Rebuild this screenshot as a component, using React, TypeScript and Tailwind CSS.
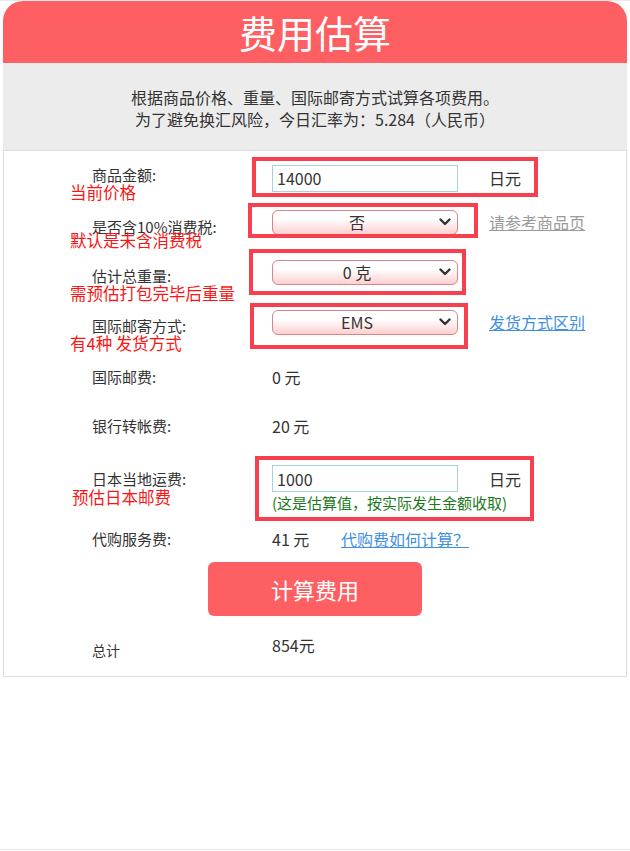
import React from "react";

const FONT = "font-['Microsoft_YaHei','Noto_Sans_CJK_SC',sans-serif]";

function Chevron() {
  return (
    <svg width="12" height="8" viewBox="0 0 12 8" aria-hidden className="pointer-events-none absolute right-[7px] top-1/2 -translate-y-1/2">
      <polyline points="1.5,1.5 6,6 10.5,1.5" fill="none" stroke="#333" strokeWidth="2.4" strokeLinecap="round" strokeLinejoin="round" />
    </svg>
  );
}

function PinkSelect({ value }: { value: string }) {
  return (
    <div className="relative h-[25px] w-[186px]">
      <select
        value={value}
        onChange={() => {}}
        className="h-full w-full appearance-none rounded-[6px] border border-[#da8489] bg-linear-to-b from-white from-35% to-[#fccfcf] pr-[16px] text-[16px] leading-[23px] text-[#333] [text-align-last:center] focus:outline-none"
      >
        <option value={value}>{value}</option>
      </select>
      <Chevron />
    </div>
  );
}

function Note({ className, children }: { className: string; children: React.ReactNode }) {
  return (
    <span className={`pointer-events-none absolute whitespace-nowrap text-[16.5px] leading-[17px] text-[#fb1515] ${className}`}>
      {children}
    </span>
  );
}

function RedBox({ className }: { className: string }) {
  return <span className={`pointer-events-none absolute border-[4px] border-[#f7404f] ${className}`} />;
}

export default function App() {
  return (
    <div className={`${FONT} h-[850px] border-y border-[#e8e8e8] bg-white px-[3px] text-[#333]`}>
      <header className="flex h-[62px] items-center justify-center rounded-t-[20px] bg-[#fd5f62] text-[38px] leading-none text-white">
        费用估算
      </header>

      <div className="h-[87px] bg-[#ececec] pt-[23px] text-center text-[16px] leading-[22px]">
        <p>根据商品价格、重量、国际邮寄方式试算各项费用。</p>
        <p>为了避免换汇风险，今日汇率为：5.284（人民币）</p>
      </div>

      <div className="border border-[#d8dee3] pt-[6px]">
        {/* 商品金额 */}
        <div className="relative flex h-[42px] items-center">
          <div className="-mt-[6px] w-[268px] pl-[88px] text-[15px] leading-[16px]">商品金额:</div>
          <input
            readOnly
            value="14000"
            className="h-[27px] w-[186px] border border-[#a3d4dd] px-[4px] text-[16px] text-[#333] focus:outline-none"
          />
          <span className="ml-[31px] text-[16px]">日元</span>
          <Note className="left-[66px] top-[27px]">当前价格</Note>
          <RedBox className="left-[248px] top-0 h-[40px] w-[286px]" />
        </div>

        {/* 消费税 */}
        <div className="relative flex h-[46px] items-center">
          <div className="mt-[10px] w-[268px] pl-[88px] text-[15px] leading-[16px]">是否含10%消费税:</div>
          <PinkSelect value="否" />
          <a href="#" className="ml-[31px] text-[16px] text-[#9a9a9a] underline">请参考商品页</a>
          <Note className="left-[66px] top-[33px]">默认是未含消费税</Note>
          <RedBox className="left-[244px] top-[4px] h-[35px] w-[230px]" />
        </div>

        {/* 重量 */}
        <div className="relative flex h-[54px] items-center">
          <div className="mt-[8px] w-[268px] pl-[88px] text-[15px] leading-[16px]">估计总重量:</div>
          <PinkSelect value="0 克" />
          <Note className="left-[66px] top-[40px]">需预估打包完毕后重量</Note>
          <RedBox className="left-[245px] top-[4px] h-[46px] w-[217px]" />
        </div>

        {/* 邮寄方式 */}
        <div className="relative flex h-[46px] items-center">
          <div className="mt-[8px] w-[268px] pl-[88px] text-[15px] leading-[16px]">国际邮寄方式:</div>
          <PinkSelect value="EMS" />
          <a href="#" className="ml-[31px] text-[16px] text-[#3f8fe3] underline">发货方式区别</a>
          <Note className="left-[66px] top-[36px]">有4种 发货方式</Note>
          <RedBox className="left-[246px] top-[4px] h-[46px] w-[218px]" />
        </div>

        <div className="flex h-[64px] items-center">
          <div className="w-[268px] pl-[88px] text-[15px]">国际邮费:</div>
          <span className="text-[16px]">0 元</span>
        </div>

        <div className="flex h-[34px] items-center">
          <div className="w-[268px] pl-[88px] text-[15px]">银行转帐费:</div>
          <span className="text-[16px]">20 元</span>
        </div>

        {/* 日本当地运费 */}
        <div className="relative h-[84px] pt-[22px]">
          <div className="flex items-center">
            <div className="w-[268px] pl-[88px] text-[15px] leading-[16px]">日本当地运费:</div>
            <input
              readOnly
              value="1000"
              className="h-[27px] w-[186px] border border-[#a3d4dd] px-[4px] text-[16px] text-[#333] focus:outline-none"
            />
            <span className="ml-[31px] text-[16px]">日元</span>
          </div>
          <p className="mt-[1px] pl-[268px] text-[15px] leading-[20px] text-[#1c7a1c]">(这是估算值，按实际发生金额收取)</p>
          <Note className="left-[68px] top-[46px]">预估日本邮费</Note>
          <RedBox className="left-[251px] top-[13px] h-[65px] w-[279px]" />
        </div>

        <div className="flex h-[24px] items-center">
          <div className="w-[268px] pl-[88px] text-[15px]">代购服务费:</div>
          <span className="w-[69px] text-[16px]">41 元</span>
          <a href="#" className="text-[16px] text-[#3f8fe3] underline">代购费如何计算？</a>
        </div>

        <button
          type="button"
          className="mx-auto mt-[11px] flex h-[54px] w-[214px] items-center justify-center rounded-[6px] bg-[#fd5f62] text-[22px] text-white"
        >
          计算费用
        </button>

        <div className="flex h-[60px] items-start pt-[18px]">
          <div className="mt-[6px] w-[268px] pl-[88px] text-[14px] leading-[20px]">总计</div>
          <span className="text-[16px] leading-[22px]">854元</span>
        </div>
      </div>
    </div>
  );
}
